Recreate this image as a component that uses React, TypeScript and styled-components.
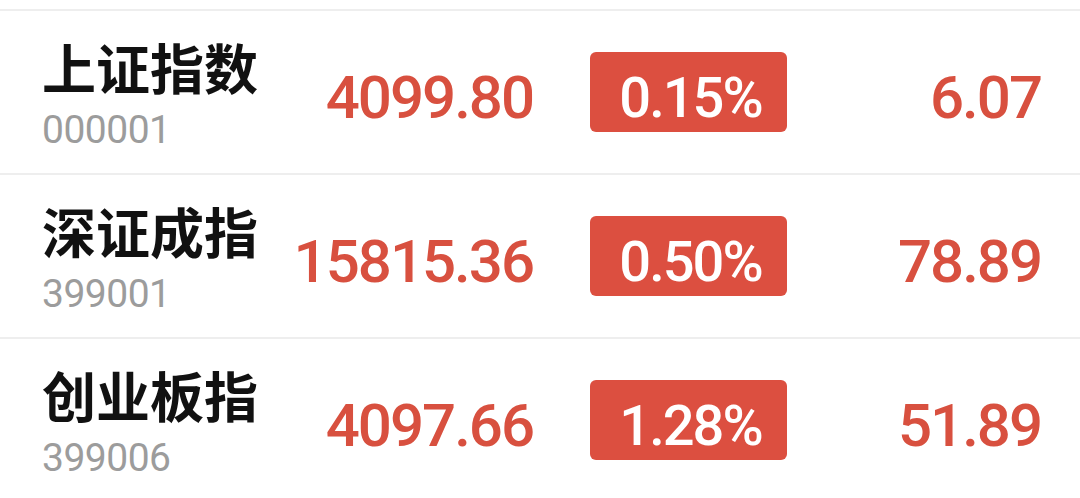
import React from "react";
import styled, { createGlobalStyle } from "styled-components";

const GlobalStyle = createGlobalStyle`
    html, body {
        margin: 0;
        padding: 0;
        background: #fff;
    }
    body {
        font-family: Roboto, "Noto Sans CJK SC", sans-serif;
    }
`

const List = styled.div`
    width: 1080px;
    padding-top: 9px;
    background: #fff;
`

const Row = styled.div`
    display: grid;
    grid-template-columns: 240px 251px 254px 1fr;
    align-items: center;
    height: 162px;
    padding: 0 39px 0 42px;
    border-top: 2px solid #eeeeee;
`

const NameBlock = styled.div`
    display: flex;
    flex-direction: column;
`

const Name = styled.span`
    font-family: "Noto Sans CJK SC", sans-serif;
    font-size: 54px;
    font-weight: 700;
    line-height: 60px;
    color: #111;
`

const Code = styled.span`
    margin-top: 15px;
    font-family: Roboto, sans-serif;
    font-size: 39px;
    font-weight: 400;
    line-height: 36px;
    letter-spacing: -0.5px;
    color: #9c9c9c;
`

const Price = styled.span`
    justify-self: end;
    margin-top: 11px;
    font-family: Roboto, sans-serif;
    font-size: 60px;
    font-weight: 500;
    letter-spacing: -2px;
    color: #d8503f;
`

const Badge = styled.div`
    justify-self: end;
    box-sizing: border-box;
    display: flex;
    align-items: center;
    justify-content: center;
    width: 197px;
    height: 80px;
    padding: 11px 0 0 4px;
    border-radius: 6px;
    background: #dc4f40;
    font-family: Roboto, sans-serif;
    font-size: 56px;
    font-weight: 500;
    letter-spacing: -2px;
    color: #fff;
`

const Change = styled(Price)``

const rows = [
    { name: "上证指数", code: "000001", price: "4099.80", pct: "0.15%", change: "6.07" },
    { name: "深证成指", code: "399001", price: "15815.36", pct: "0.50%", change: "78.89" },
    { name: "创业板指", code: "399006", price: "4097.66", pct: "1.28%", change: "51.89" },
]

function App() {
    return (
        <>
            <GlobalStyle />
            <List>
                {rows.map((r) => (
                    <Row key={r.code}>
                        <NameBlock>
                            <Name>{r.name}</Name>
                            <Code>{r.code}</Code>
                        </NameBlock>
                        <Price>{r.price}</Price>
                        <Badge>{r.pct}</Badge>
                        <Change>{r.change}</Change>
                    </Row>
                ))}
            </List>
        </>
    )
}

export default App;
